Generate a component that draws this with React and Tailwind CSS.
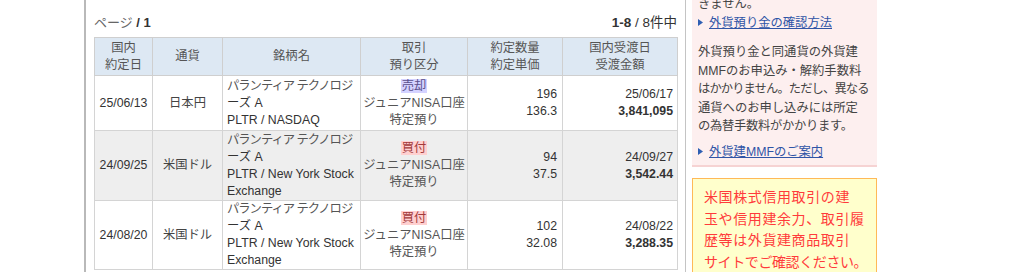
import React from 'react';

const rows = [
  {
    date: '25/06/13',
    currency: '日本円',
    market: ['PLTR / NASDAQ'],
    side: '売却',
    qty: '196',
    price: '136.3',
    settle: '25/06/17',
    amount: '3,841,095',
    height: 'h-[55px]',
    bg: 'bg-white',
  },
  {
    date: '24/09/25',
    currency: '米国ドル',
    market: ['PLTR / New York Stock', 'Exchange'],
    side: '買付',
    qty: '94',
    price: '37.5',
    settle: '24/09/27',
    amount: '3,542.44',
    height: 'h-[70px]',
    bg: 'bg-[#eeeeee]',
  },
  {
    date: '24/08/20',
    currency: '米国ドル',
    market: ['PLTR / New York Stock', 'Exchange'],
    side: '買付',
    qty: '102',
    price: '32.08',
    settle: '24/08/22',
    amount: '3,288.35',
    height: 'h-[69px]',
    bg: 'bg-white',
  },
];

const Bullet = () => (
  <svg width="5" height="7" viewBox="0 0 5 7" className="inline-block mr-[6px] mb-[1px]">
    <path d="M0 0 L5 3.5 L0 7 Z" fill="#2f5fb3" />
  </svg>
);

const Th = ({ children, w }) => (
  <th className={`${w} border border-[#cfcfcf] bg-[#dde8f3] font-normal text-[#555] text-center align-middle leading-[17px] px-[3px]`}>
    {children}
  </th>
);

const App = () => {
  return (
    <div
      className="h-[272px] overflow-hidden bg-white flex text-[#333]"
      style={{ fontFamily: '"Liberation Sans", Arial, "Noto Sans CJK JP", sans-serif' }}
    >
      <div className="w-[84px] shrink-0" />

      {/* main panel */}
      <div className="w-[602px] shrink-0 border-l-2 border-r border-l-[#b9b9b9] border-r-[#c4c4c4] pl-[8px] pr-[8px]">
        <div className="mt-[14px] h-[17px] flex justify-between items-end leading-[17px]">
          <div className="text-[13px] text-[#666]">
            ページ <span className="font-bold text-[#333]">/ 1</span>
          </div>
          <div className="text-[13.5px]">
            <span className="font-bold">1-8</span> / 8件中
          </div>
        </div>

        <table className="mt-[6px] w-[583px] border-collapse table-fixed text-[12.3px]">
          <thead>
            <tr className="h-[38px]">
              <Th w="w-[58px]">国内<br />約定日</Th>
              <Th w="w-[70px]">通貨</Th>
              <Th w="w-[138px]">銘柄名</Th>
              <Th w="w-[107px]">取引<br />預り区分</Th>
              <Th w="w-[95px]">約定数量<br />約定単価</Th>
              <Th w="w-[115px]">国内受渡日<br />受渡金額</Th>
            </tr>
          </thead>
          <tbody>
            {rows.map((r) => (
              <tr key={r.date} className={`${r.height} ${r.bg}`}>
                <td className="border border-[#d4d4d4] text-center align-middle leading-[17px]">{r.date}</td>
                <td className="border border-[#d4d4d4] text-center align-middle leading-[17px] text-[#444]">{r.currency}</td>
                <td className="border border-[#d4d4d4] align-middle leading-[17px] pl-[4px] whitespace-nowrap">
                  <div className="text-[#555] tracking-[-1px]">パランティア テクノロジ</div>
                  <div>ーズ A</div>
                  {r.market.map((m) => (
                    <div key={m}>{m}</div>
                  ))}
                </td>
                <td className="border border-[#d4d4d4] text-center align-middle leading-[17px] text-[#555]">
                  <span
                    className={
                      r.side === '売却'
                        ? 'bg-[#d4d2ff] text-[#5a4f8c] px-[1px]'
                        : 'bg-[#ffd0d0] text-[#a33a3a] px-[1px]'
                    }
                  >
                    {r.side}
                  </span>
                  <div className="whitespace-nowrap">ジュニアNISA口座</div>
                  <div>特定預り</div>
                </td>
                <td className="border border-[#d4d4d4] text-right align-middle leading-[17px] pr-[5px]">
                  <div>{r.qty}</div>
                  <div>{r.price}</div>
                </td>
                <td className="border border-[#d4d4d4] text-right align-middle leading-[17px] pr-[4px]">
                  <div>{r.settle}</div>
                  <div className="font-bold">{r.amount}</div>
                </td>
              </tr>
            ))}
          </tbody>
        </table>
      </div>

      {/* sidebar */}
      <div className="w-[191px] shrink-0 pl-[6px]">
        <div className="-mt-[5px] bg-[#fdefef] border-b-2 border-[#f6d3d3] pl-[6px] pr-[4px] pt-[0px] pb-[4px] text-[12.3px] leading-[18.5px] text-[#444] whitespace-nowrap">
          <div>きません。</div>
          <div className="text-[#2f54a6]">
            <Bullet />
            <span className="underline">外貨預り金の確認方法</span>
          </div>
          <div className="mt-[11px]">
            <div>外貨預り金と同通貨の外貨建</div>
            <div>MMFのお申込み・解約手数料</div>
            <div className="tracking-[-0.9px]">はかかりません。ただし、異なる</div>
            <div>通貨へのお申し込みには所定</div>
            <div className="tracking-[-0.3px]">の為替手数料がかかります。</div>
          </div>
          <div className="mt-[7px] text-[#2f54a6]">
            <Bullet />
            <span className="underline">外貨建MMFのご案内</span>
          </div>
        </div>

        <div className="mt-[11px] bg-[#ffffcc] border border-[#ffb957] pl-[11px] pr-[4px] pt-[8px] pb-[20px] text-[14px] leading-[21.5px] tracking-[0.6px] text-[#ff3b3b] whitespace-nowrap">
          <div>米国株式信用取引の建</div>
          <div>玉や信用建余力、取引履</div>
          <div>歴等は外貨建商品取引</div>
          <div className="tracking-[-0.4px]">サイトでご確認ください。</div>
        </div>
      </div>

      <div className="flex-1" />
    </div>
  );
};

export default App;
